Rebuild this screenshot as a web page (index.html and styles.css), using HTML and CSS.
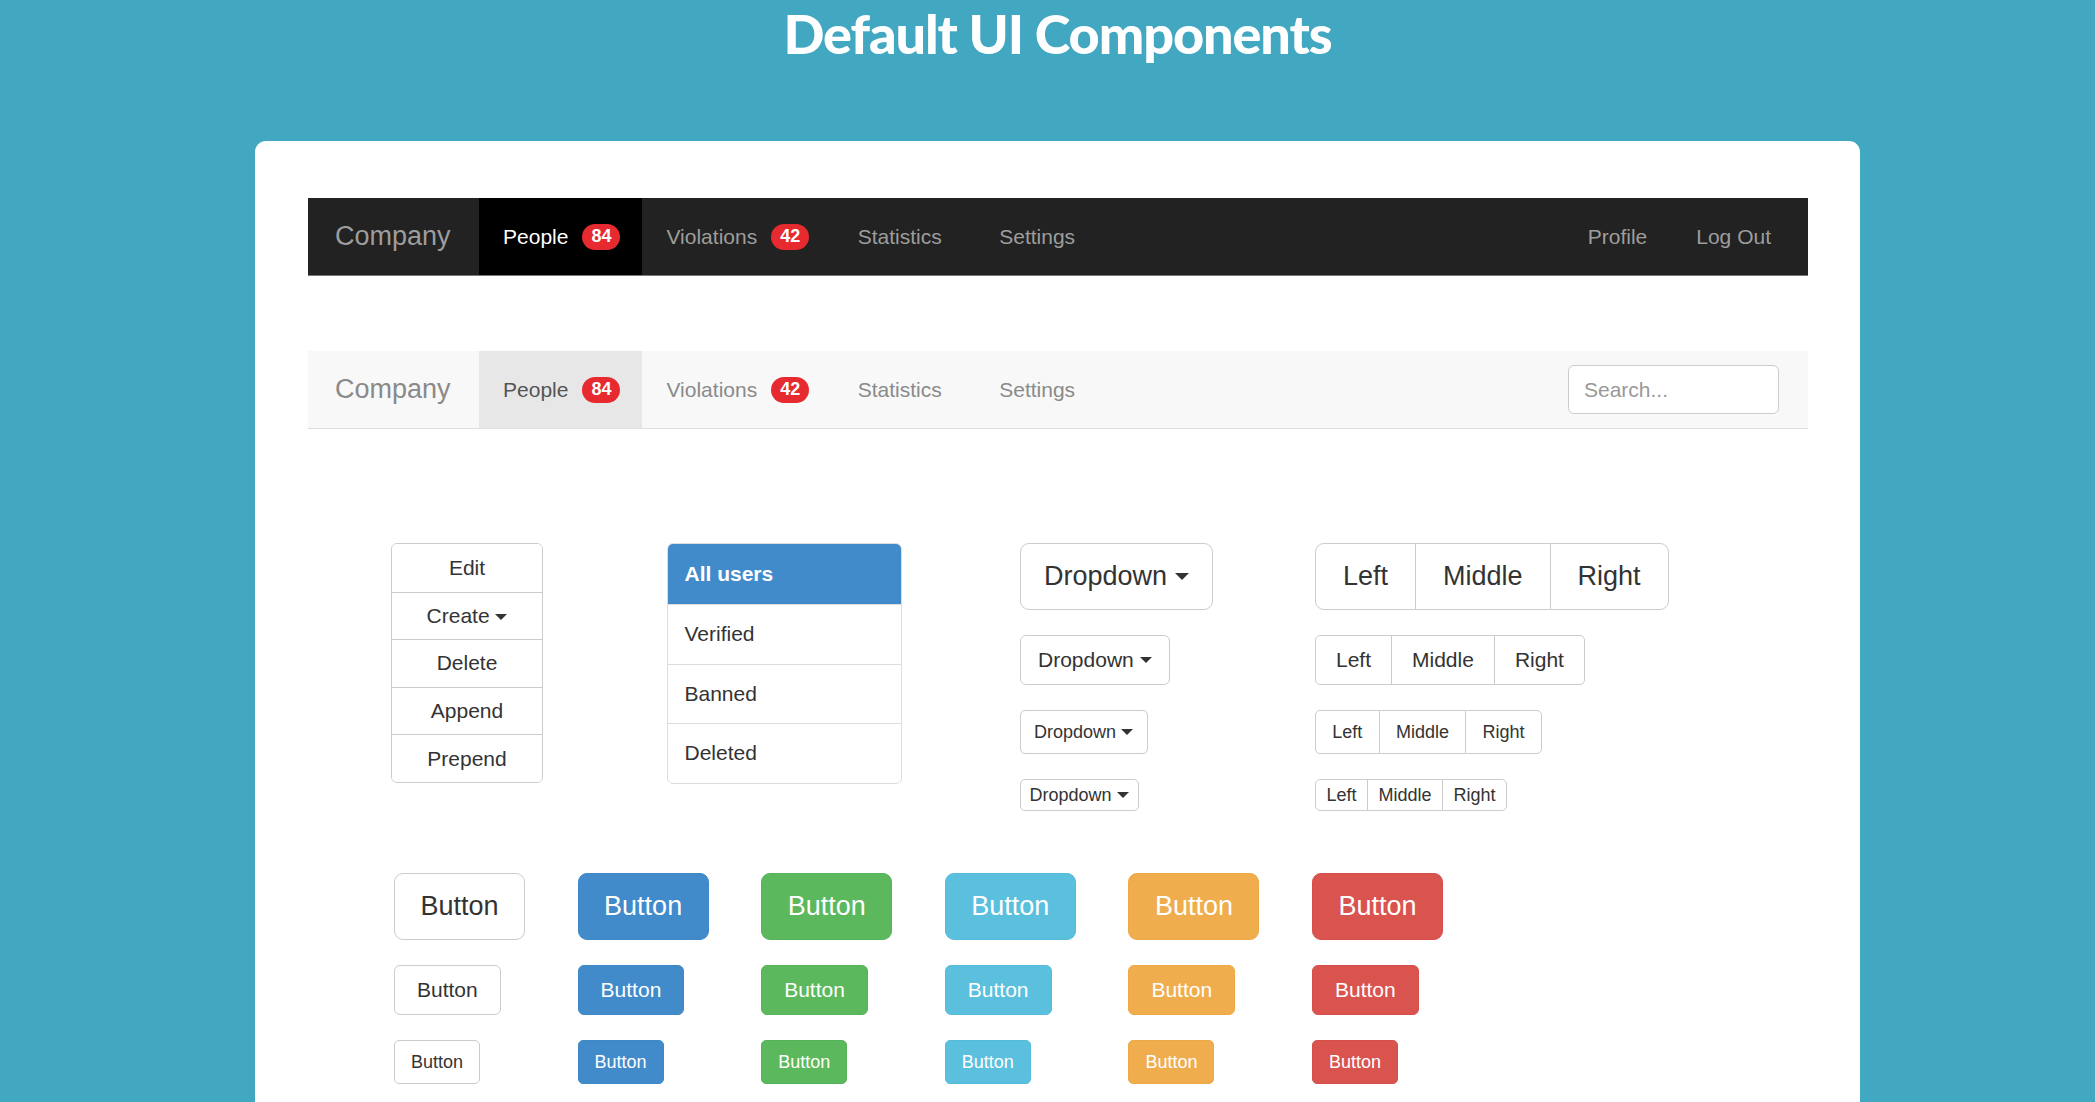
FILE: index.html
```html
<!DOCTYPE html>
<html lang="en">
<head>
<meta charset="utf-8">
<title>Default UI Components</title>
<link rel="stylesheet" href="styles.css">
</head>
<body>
<div class="page">
  <h1 class="title">Default UI Components</h1>
  <div class="card">
    <nav class="navbar navbar-dark">
      <a class="brand">Company</a>
      <ul class="nav">
        <li class="active"><a>People <span class="badge">84</span></a></li>
        <li><a>Violations <span class="badge">42</span></a></li>
        <li class="spaced"><a>Statistics</a></li>
        <li><a>Settings</a></li>
      </ul>
      <ul class="nav nav-right">
        <li><a>Profile</a></li>
        <li><a>Log Out</a></li>
      </ul>
    </nav>

    <nav class="navbar navbar-light">
      <a class="brand">Company</a>
      <ul class="nav">
        <li class="active"><a>People <span class="badge">84</span></a></li>
        <li><a>Violations <span class="badge">42</span></a></li>
        <li class="spaced"><a>Statistics</a></li>
        <li><a>Settings</a></li>
      </ul>
      <input class="search" type="text" placeholder="Search...">
    </nav>

    <section class="components">
      <div class="vgroup">
        <button class="vbtn">Edit</button>
        <button class="vbtn">Create <span class="caret"></span></button>
        <button class="vbtn">Delete</button>
        <button class="vbtn">Append</button>
        <button class="vbtn">Prepend</button>
      </div>

      <div class="list-group">
        <div class="list-item active">All users</div>
        <div class="list-item">Verified</div>
        <div class="list-item">Banned</div>
        <div class="list-item">Deleted</div>
      </div>

      <div class="stack">
        <button class="btn btn-default btn-lg dd">Dropdown <span class="caret caret-lg"></span></button>
        <button class="btn btn-default btn-md dd">Dropdown <span class="caret"></span></button>
        <button class="btn btn-default btn-sm dd">Dropdown <span class="caret"></span></button>
        <button class="btn btn-default btn-xs dd">Dropdown <span class="caret"></span></button>
      </div>

      <div class="stack">
        <div class="btn-group group-lg">
          <button class="btn btn-default btn-lg">Left</button><button class="btn btn-default btn-lg">Middle</button><button class="btn btn-default btn-lg">Right</button>
        </div>
        <div class="btn-group group-md">
          <button class="btn btn-default btn-md">Left</button><button class="btn btn-default btn-md">Middle</button><button class="btn btn-default btn-md">Right</button>
        </div>
        <div class="btn-group group-sm">
          <button class="btn btn-default btn-sm">Left</button><button class="btn btn-default btn-sm">Middle</button><button class="btn btn-default btn-sm">Right</button>
        </div>
        <div class="btn-group group-xs">
          <button class="btn btn-default btn-xs">Left</button><button class="btn btn-default btn-xs">Middle</button><button class="btn btn-default btn-xs">Right</button>
        </div>
      </div>
    </section>

    <section class="buttons">
      <button class="btn btn-default btn-lg">Button</button>
      <button class="btn btn-primary btn-lg">Button</button>
      <button class="btn btn-success btn-lg">Button</button>
      <button class="btn btn-info btn-lg">Button</button>
      <button class="btn btn-warning btn-lg">Button</button>
      <button class="btn btn-danger btn-lg">Button</button>

      <button class="btn btn-default btn-md">Button</button>
      <button class="btn btn-primary btn-md">Button</button>
      <button class="btn btn-success btn-md">Button</button>
      <button class="btn btn-info btn-md">Button</button>
      <button class="btn btn-warning btn-md">Button</button>
      <button class="btn btn-danger btn-md">Button</button>

      <button class="btn btn-default btn-sm">Button</button>
      <button class="btn btn-primary btn-sm">Button</button>
      <button class="btn btn-success btn-sm">Button</button>
      <button class="btn btn-info btn-sm">Button</button>
      <button class="btn btn-warning btn-sm">Button</button>
      <button class="btn btn-danger btn-sm">Button</button>
    </section>
  </div>
</div>
</body>
</html>
```
FILE: styles.css
```css
* { box-sizing: border-box; }

html, body {
  margin: 0;
  padding: 0;
}

body {
  background: #42a7c0;
  font-family: "Liberation Sans", Arial, sans-serif;
  color: #333;
}

.page {
  width: 1605px;
  margin-left: 255px;
  padding-top: 1px;
}

.title {
  margin: 0;
  text-align: center;
  font-family: Lato, "Liberation Sans", sans-serif;
  font-weight: 900;
  font-size: 54px;
  line-height: 65px;
  letter-spacing: -1.1px;
  color: #fff;
}

.card {
  margin-top: 75px;
  background: #fff;
  border-radius: 11px;
  padding: 57px 52px 60px 53px;
}

/* Navbars */
.navbar {
  display: flex;
  align-items: stretch;
  height: 78px;
}

.navbar a { cursor: pointer; }

.brand {
  display: flex;
  align-items: center;
  padding: 0 28px 0 27px;
  font-size: 27px;
}

.nav {
  display: flex;
  list-style: none;
  margin: 0;
  padding: 0;
}

.nav li a {
  display: flex;
  align-items: center;
  height: 100%;
  padding: 0 24.5px;
  font-size: 21px;
}

.nav li.spaced a {
  padding: 0 33px 0 27px;
}

.nav-right {
  margin-left: auto;
  margin-right: 12.5px;
}

.badge {
  display: inline-flex;
  align-items: center;
  justify-content: center;
  height: 26px;
  min-width: 38px;
  padding: 0 9px;
  margin-left: 14px;
  margin-right: -3px;
  border-radius: 13px;
  background: #e62a2f;
  color: #fff;
  font-size: 18px;
  font-weight: bold;
}

.navbar-dark {
  background: #222;
  border-bottom: 1px solid #7a7a7a;
}
.navbar-dark .brand,
.navbar-dark .nav a { color: #9d9d9d; }
.navbar-dark .nav .active a {
  background: #000;
  color: #fff;
}

.navbar-light {
  margin-top: 75px;
  background: #f8f8f8;
  border-bottom: 1px solid #dedede;
}
.navbar-light .brand,
.navbar-light .nav a { color: #8a8a8a; }
.navbar-light .nav .active a {
  background: #e7e7e7;
  color: #555;
}

.search {
  align-self: center;
  margin-left: auto;
  margin-right: 29px;
  width: 211px;
  height: 49px;
  padding: 0 15px;
  border: 1px solid #ccc;
  border-radius: 6px;
  background: #fff;
  font-family: "Liberation Sans", Arial, sans-serif;
  font-size: 21px;
  color: #555;
}
.search::placeholder { color: #999; }

/* Components row */
.components {
  margin-top: 114px;
  padding-left: 83px;
  display: grid;
  grid-template-columns: 276px 352.5px 295.5px auto;
  align-items: start;
}

.vgroup {
  display: flex;
  flex-direction: column;
  width: 152px;
  border: 1px solid #ccc;
  border-radius: 6px;
  overflow: hidden;
}

.vbtn {
  height: 47.6px;
  border: 0;
  border-top: 1px solid #ccc;
  background: #fff;
  font-family: "Liberation Sans", Arial, sans-serif;
  font-size: 21px;
  color: #333;
  padding: 0;
}
.vbtn:first-child { border-top: 0; }

.list-group {
  width: 234.5px;
  border: 1px solid #ddd;
  border-radius: 6px;
  overflow: hidden;
}

.list-item {
  display: flex;
  align-items: center;
  height: 59.5px;
  padding: 0 16.5px;
  border-top: 1px solid #ddd;
  font-size: 21px;
  color: #333;
}
.list-item.active {
  height: 60px;
  border-top: 0;
  background: #428bca;
  color: #fff;
  font-weight: bold;
}

.stack {
  display: flex;
  flex-direction: column;
  align-items: flex-start;
  gap: 25px;
}

/* Buttons */
.btn {
  display: inline-flex;
  align-items: center;
  justify-content: center;
  white-space: pre;
  border: 1px solid transparent;
  font-family: "Liberation Sans", Arial, sans-serif;
  cursor: pointer;
  margin: 0;
}

.btn-lg { height: 67px; font-size: 27px; border-radius: 9px; padding: 0 23.5px; }
.btn-md { height: 50px; font-size: 21px; border-radius: 6px; padding: 0 17.5px; }
.btn-sm { height: 44px; font-size: 18px; border-radius: 5px; padding: 0 13.5px; }
.btn-xs { height: 32px; font-size: 18px; border-radius: 5px; padding: 0 9px; }

.btn-default { background: #fff; border-color: #ccc; color: #333; }
.btn-primary { background: #428bca; border-color: #3f87c5; color: #fff; }
.btn-success { background: #5cb85c; border-color: #57b357; color: #fff; }
.btn-info    { background: #5bc0de; border-color: #56bcdb; color: #fff; }
.btn-warning { background: #f0ad4e; border-color: #eea947; color: #fff; }
.btn-danger  { background: #d9534f; border-color: #d64f4b; color: #fff; }

.caret {
  display: inline-block;
  width: 0;
  height: 0;
  margin-left: 0;
  border-top: 6px solid #333;
  border-left: 6px solid transparent;
  border-right: 6px solid transparent;
  vertical-align: middle;
}
.caret-lg {
  border-top-width: 7px;
  border-left-width: 7px;
  border-right-width: 7px;
}

.btn-group {
  display: inline-flex;
}
.btn-group .btn { border-radius: 0; }
.btn-group .btn + .btn { margin-left: -1px; }
.group-lg .btn:first-child { border-radius: 9px 0 0 9px; }
.group-lg .btn:last-child { border-radius: 0 9px 9px 0; }
.group-md .btn:first-child,
.group-sm .btn:first-child,
.group-xs .btn:first-child { border-radius: 5px 0 0 5px; }
.group-md .btn:last-child,
.group-sm .btn:last-child,
.group-xs .btn:last-child { border-radius: 0 5px 5px 0; }
.group-lg .btn { padding: 0 27px; }
.group-md .btn { padding: 0 20px; }
.group-sm .btn { padding: 0 16.3px; }
.group-xs .btn { padding: 0 10.5px; }

/* Buttons grid */
.buttons {
  margin-top: 62px;
  padding-left: 86px;
  display: grid;
  grid-template-columns: repeat(6, 183.6px);
  row-gap: 25px;
  justify-items: start;
}
.buttons .btn-lg { padding: 0 25.5px; }
.buttons .btn-md { padding: 0 22px; }
.buttons .btn-sm { padding: 0 16px; }
```
